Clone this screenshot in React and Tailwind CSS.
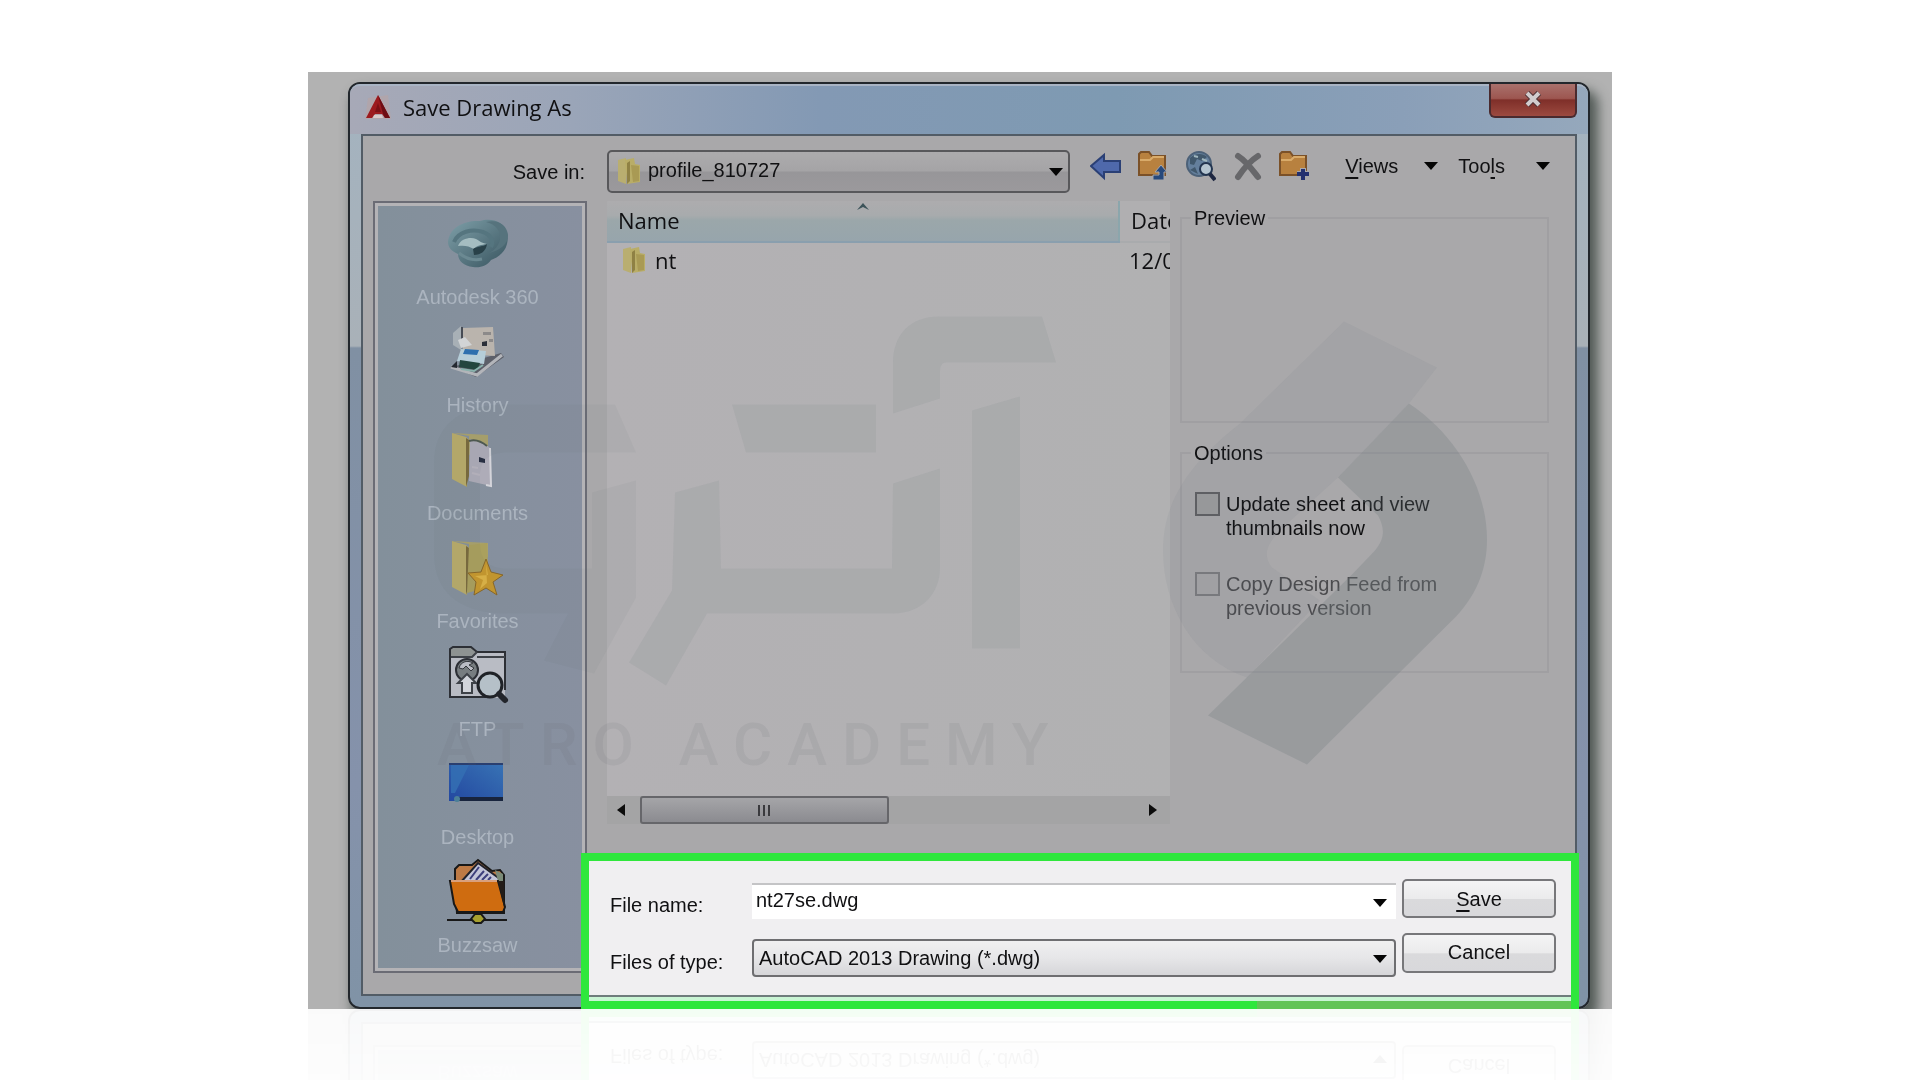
const ui = "font-['Liberation_Sans',Arial,sans-serif] text-[20px] leading-[24px]";
const segoe = "font-['Open_Sans','Noto_Sans',sans-serif] text-[22px] leading-[30px]";

function Arrow({ className }) {
    return (
        <svg viewBox="0 0 14 8" className={`w-[14px] h-[8px] ${className || ""}`} aria-hidden="true">
            <path d="M0 0h14L7 8z" fill="#050505" />
        </svg>
    )
}

function SmallFolder({ className }) {
    return (
        <svg viewBox="0 0 26 28" className={`w-[26px] h-[28px] ${className || ""}`} aria-hidden="true">
            <path d="M2 3l8-2v26l-8-3z" fill="#b9ae70" />
            <path d="M9 3l9-2 1 6 5 1v17l-13 2z" fill="#b9ad67" />
            <path d="M11 6l3-2v20l-3 3z" fill="#8f8144" />
            <path d="M15 8l8 1v15l-6 1z" fill="#a99a54" />
        </svg>
    )
}

function AppLogo() {
    return (
        <svg viewBox="0 0 28 28" className="w-[28px] h-[28px]" aria-hidden="true">
            <path d="M1 26L4 5l20-3 3 24z" fill="#b7a3a3" opacity=".6" />
            <path d="M14 2L2 25h6l3-4h7l3 4h5z" fill="#9c1a1e" />
            <path d="M14 2l5 19 2 4h5z" fill="#6e0d12" />
            <path d="M14 10l-3 9h6z" fill="#7b1015" />
            <path d="M10 22h8l1 3H9z" fill="#d9c9c9" />
        </svg>
    )
}

function CloudIcon() {
    return (
        <svg viewBox="0 0 64 56" className="w-[64px] h-[56px]">
            <defs>
                <linearGradient id="cloud" x1="0" y1="0" x2="1" y2="1">
                    <stop offset="0" stopColor="#7fa0a9" />
                    <stop offset="1" stopColor="#38545f" />
                </linearGradient>
            </defs>
            <path d="M2 26C3 12 18 4 34 5c6-2 14-2 20 2 7 5 9 13 7 21-2 8-8 13-16 16-4 6-11 8-18 7-9-1-15-6-15-13C5 35 2 31 2 26z" fill="url(#cloud)" />
            <path d="M40 6c9 2 15 8 14 17-1 6-5 11-11 14 12-3 19-9 19-18C61 9 52 3 40 6z" fill="#56737d" />
            <path d="M8 26c4-10 18-14 29-10 8 3 11 9 8 15" fill="none" stroke="#55757f" strokeWidth="4" />
            <path d="M12 30c3-8 13-9 18-7 4 2 5 4 11 5-6 1-10 1-13 5-5-3-10-4-16-3z" fill="#a5bdc1" />
            <path d="M27 33c4-3 10-2 14-5-1 7-6 11-13 11z" fill="#294149" />
            <path d="M13 37c6 5 14 8 23 6" fill="none" stroke="#6b8992" strokeWidth="3" />
        </svg>
    )
}

function HistoryIcon() {
    return (
        <svg viewBox="2 0 64 56" className="w-[64px] h-[56px]">
            <path d="M8 43l32-9 17-5 3 4-28 20z" fill="#5c5f69" />
            <path d="M7 43l26 8 25-20" fill="none" stroke="#b3b5ba" strokeWidth="3" />
            <path d="M9 9l8-7v24l-8-5z" fill="#a8b0b6" />
            <path d="M19 4l30-1 2 29-32-2z" fill="#bab4ad" />
            <path d="M18 3v18" stroke="#474c55" strokeWidth="2" />
            <path d="M39 8h8v3h-8zM45 15h4v3h-4z" fill="#8c8a8a" />
            <path d="M38 18l5-1v5h-5z" fill="#2b2f38" />
            <path d="M14 16l7-3 7 8-11 3z" fill="#d2d4d6" />
            <path d="M17 25l25 2-2 13-27-3z" fill="#b5cdd8" />
            <path d="M21 25l14 1-2 5-14-1z" fill="#2d6fae" />
            <path d="M16 36l20 3-3 7-18-3z" fill="#23463f" />
            <path d="M13 37l-6 6 6 1z" fill="#262a31" />
            <path d="M17 45l13 2 9-6" fill="none" stroke="#8ab2ad" strokeWidth="2" />
        </svg>
    )
}

function OpenFolder() {
    return (
        <>
            <path d="M10 2l36 2v14l-19 6V5z" fill="#aaa26c" />
            <path d="M10 2l14 4 3 3-2 47-15-8z" fill="#b9ac6a" />
            <path d="M24 7l3 2v36l-3 11z" fill="#7a6a3c" />
        </>
    )
}

function DocumentsIcon() {
    return (
        <svg viewBox="4 1 64 56" className="w-[64px] h-[56px]">
            <OpenFolder />
            <path d="M28 8l15 5 5 4 1 38-22-5z" fill="#aeacb8" />
            <path d="M27 10c6-2 12 0 18 5" fill="none" stroke="#4d5850" strokeWidth="2" />
            <path d="M48 17l1 38-5-1" fill="none" stroke="#d4d4da" strokeWidth="2" />
            <path d="M37 26l6 2v4l-6-1z" fill="#262c40" />
            <path d="M30 42l8 2M30 36l6 1" stroke="#b8b4bf" strokeWidth="2" />
        </svg>
    )
}

function FavoritesIcon() {
    return (
        <svg viewBox="4 1 64 56" className="w-[64px] h-[56px]">
            <OpenFolder />
            <path d="M27 6l18-2 2 44-22 6z" fill="#aaa05d" />
            <path d="M44 20l5 13 12 3-10 7 4 13-11-7-12 7 2-13-8-9 13-1z" fill="#c8982c" stroke="#8a6726" />
            <path d="M44 25l2 11-13 1 8 4-3 9 7-6z" fill="#dfb444" />
        </svg>
    )
}

function FtpIcon() {
    return (
        <svg viewBox="1 3 64 56" className="w-[64px] h-[56px] overflow-visible">
            <path d="M5 4l3-2h19l5 5h28v46H5z" fill="#b9bcc4" />
            <path d="M5 4l3-2h18l5 6-4 4H6z" fill="#8e9392" />
            <path d="M41 52H5V4l3-2h18l6 5h28v38" fill="none" stroke="#2c2f35" strokeWidth="2" />
            <path d="M6 12h21l5-5M32 12h28" fill="none" stroke="#3e4248" strokeWidth="2" />
            <circle cx="22" cy="25" r="11" fill="#777d80" stroke="#2c2f35" strokeWidth="2" />
            <path d="M14 23c2-7 9-8 14-5l-4 2 5 3-3 3-5-5-3 3z" fill="#b9bcc4" stroke="#34373c" />
            <path d="M22 29l9 9h-4v10H17V38h-4z" fill="#d2d5db" stroke="#3e4248" strokeWidth="2" />
            <circle cx="45" cy="40" r="12" fill="#b5c0c8" stroke="#1f2227" strokeWidth="3" />
            <path d="M54 49l6 6" stroke="#22252b" strokeWidth="6" strokeLinecap="round" />
        </svg>
    )
}

function DesktopIcon() {
    return (
        <svg viewBox="3 1 64 56" className="w-[64px] h-[56px]">
            <defs>
                <linearGradient id="screen" x1="0" y1="1" x2="1" y2="0">
                    <stop offset="0" stopColor="#2348a0" />
                    <stop offset="1" stopColor="#3873b5" />
                </linearGradient>
            </defs>
            <path d="M6 8h54v38H6z" fill="url(#screen)" />
            <path d="M8 10h18L12 38H8z" fill="#3470b4" opacity=".8" />
            <path d="M6 9h54" stroke="#2a3f70" strokeWidth="2" />
            <path d="M12 42h48v4H12z" fill="#18243d" />
            <circle cx="14" cy="44" r="3" fill="#4b7f98" />
        </svg>
    )
}

function BuzzsawIcon() {
    return (
        <svg viewBox="1 6 64 64" className="w-[64px] h-[64px] -mb-2 overflow-visible">
            <path d="M10 22V11l4-4h13l6-5 14 11 8-1 4 5v38H12z" fill="#bd7a45" stroke="#181818" strokeWidth="2" />
            <path d="M16 24L33 5l22 16v6z" fill="#c3c5d8" stroke="#20222c" strokeWidth="2" />
            <path d="M25 21l9-12M31 22l8-9M37 22l6-6M43 22l3-3" stroke="#3d3f7c" strokeWidth="2" />
            <path d="M50 12l8 4v7h-5z" fill="#7b8b78" />
            <path d="M5 23h48l7 26-2 5H13l-4-8z" fill="#cf6c10" stroke="#181818" strokeWidth="2" />
            <path d="M53 23l6 26V23z" fill="#231c18" />
            <path d="M6 23h46" stroke="#d9a07c" strokeWidth="2" />
            <path d="M2 62h60" stroke="#181818" strokeWidth="2" />
            <path d="M26 61l4-5h6l4 5-4 4h-6z" fill="#a8a12e" stroke="#181818" strokeWidth="2" />
        </svg>
    )
}

const places = [
    { name: "Autodesk 360", Icon: CloudIcon },
    { name: "History", Icon: HistoryIcon },
    { name: "Documents", Icon: DocumentsIcon },
    { name: "Favorites", Icon: FavoritesIcon },
    { name: "FTP", Icon: FtpIcon },
    { name: "Desktop", Icon: DesktopIcon },
    { name: "Buzzsaw", Icon: BuzzsawIcon },
];

function FolderShape() {
    return (
        <>
            <path d="M2 7V4l2-2h8l3 4h13v19H2z" fill="#b8813f" stroke="#7b5128" strokeWidth="2" />
            <path d="M3 10h10l3-3h11" fill="none" stroke="#d9ab6a" strokeWidth="2" />
        </>
    )
}

const tools = [
    {
        name: "Back",
        art: <path d="M1 16L14 5v6h16v11H14v6z" fill="#4f69ab" stroke="#2b4075" strokeWidth="2" />,
    },
    {
        name: "Up one level",
        art: (
            <>
                <FolderShape />
                <path d="M16 30v-5h6v-3h-4l6-7 6 7h-3v8z" fill="#27497c" stroke="#a8a7aa" />
            </>
        ),
    },
    {
        name: "Search the Web",
        art: (
            <>
                <circle cx="15" cy="14" r="12" fill="#647f9c" stroke="#4c6178" strokeWidth="2" />
                <path d="M6 8c5-5 13-5 17-1l-5 4-5-2-3 6-4-1zM6 20l5-3 3 7z" fill="#41586c" />
                <path d="M10 6l4 1M18 9l5 2" stroke="#9fb5bd" strokeWidth="2" />
                <circle cx="22" cy="19" r="6" fill="#b4c4d0" stroke="#22344f" strokeWidth="2" />
                <path d="M26 24l5 6" stroke="#1d2640" strokeWidth="4" />
            </>
        ),
    },
    {
        name: "Delete",
        art: <path d="M7 6c8 5 13 12 20 21M27 6C19 11 13 18 7 27" fill="none" stroke="#67676a" strokeWidth="6" strokeLinecap="round" />,
    },
    {
        name: "Create New Folder",
        art: (
            <>
                <FolderShape />
                <path d="M25 18v12M19 24h12" stroke="#a8a7aa" strokeWidth="6" />
                <path d="M25 19v11M19 24h12" stroke="#23306f" strokeWidth="4" />
            </>
        ),
    },
];

function Toolbar() {
    return (
        <div className="flex items-center h-8">
            <div className="flex gap-[15px]">
                {tools.map((tool) => (
                    <button key={tool.name} type="button" aria-label={tool.name} className="w-8 h-8">
                        <svg viewBox="0 0 32 32" className="w-8 h-8">{tool.art}</svg>
                    </button>
                ))}
            </div>
            <button type="button" className="ml-[35px] flex items-center gap-[26px]">
                <span><u className="underline-offset-4 decoration-2">V</u>iews</span>
                <Arrow />
            </button>
            <button type="button" className="ml-[20px] flex items-center gap-[31px]">
                <span>Too<u className="underline-offset-4 decoration-2">l</u>s</span>
                <Arrow />
            </button>
        </div>
    )
}

function Places() {
    return (
        <nav className="w-[214px] shrink-0 mb-[21px] border-2 border-[#6b6c75] bg-[#b4b3b6] p-[3px]">
            <div className="h-full bg-[linear-gradient(90deg,#83909b,#8890a0)] pt-[10px] pb-[9px] pr-[5px] flex flex-col items-center gap-[13px]">
                {places.map(({ name, Icon }) => (
                    <button key={name} type="button" className="h-[95px] w-full flex flex-col items-center gap-[11px] text-[#abb4bf]">
                        <Icon />
                        <span className="leading-[28px]">{name}</span>
                    </button>
                ))}
            </div>
        </nav>
    )
}

function FileList() {
    return (
        <div className="flex-1 min-w-0 flex flex-col">
            <div className="flex-1 bg-[linear-gradient(90deg,#b3b1b4,#b1b1b2)] overflow-hidden">
                <table className={`w-full table-fixed border-collapse text-left ${segoe}`}>
                    <colgroup>
                        <col />
                        <col className="w-[51px]" />
                    </colgroup>
                    <thead>
                        <tr className="h-[41px]">
                            <th scope="col" className="relative font-normal pl-[11px] pb-[2px] border-r-2 border-b-2 border-r-[#8ba6ac] border-b-[#8a9fae] bg-[linear-gradient(180deg,#adacae_0%,#a8abad_36%,#9ba7aa_48%,#97a5ac_100%)]">
                                Name
                                <svg viewBox="0 0 12 7" className="absolute left-1/2 top-[2px] -ml-[6px] w-[12px] h-[7px]" aria-hidden="true">
                                    <path d="M0 7L6 0l6 7-6-3z" fill="#3c5359" />
                                </svg>
                            </th>
                            <th scope="col" className="font-normal pl-[11px] pb-[2px] overflow-hidden whitespace-nowrap border-b-2 border-[#a9abad] bg-[#b0afb1]">Date</th>
                        </tr>
                    </thead>
                    <tbody>
                        <tr className="h-[36px]">
                            <td className="pl-[14px] pb-px">
                                <span className="flex items-center gap-2">
                                    <SmallFolder />
                                    nt
                                </span>
                            </td>
                            <td className="pl-[10px] pb-px overflow-hidden whitespace-nowrap">12/0</td>
                        </tr>
                    </tbody>
                </table>
            </div>
            <div className="h-[28px] flex items-center bg-[#a4a4a5]">
                <button type="button" aria-label="Scroll left" className="w-[33px] h-full flex items-center pl-[10px]">
                    <svg viewBox="0 0 8 12" className="w-[8px] h-[12px]"><path d="M8 0v12L0 6z" fill="#0c0c0c" /></svg>
                </button>
                <div className="flex-1 h-full">
                    <div className="w-1/2 h-full rounded-[3px] border-2 border-[#66666a] bg-[linear-gradient(180deg,#a5a5a8,#8b8b90)] flex items-center justify-center gap-[3px]">
                        <i className="w-[2px] h-[11px] bg-[#3a3a3e]" />
                        <i className="w-[2px] h-[11px] bg-[#3a3a3e]" />
                        <i className="w-[2px] h-[11px] bg-[#3a3a3e]" />
                    </div>
                </div>
                <button type="button" aria-label="Scroll right" className="w-[33px] h-full flex items-center justify-end pr-[13px]">
                    <svg viewBox="0 0 8 12" className="w-[8px] h-[12px]"><path d="M0 0v12l8-6z" fill="#0c0c0c" /></svg>
                </button>
            </div>
        </div>
    )
}

function Options() {
    return (
        <div className="w-[369px] shrink-0 mr-[26px] pt-[5px] flex flex-col gap-[18px]">
            <fieldset className="h-[217px] border-2 border-[#a09fa2]">
                <legend className="ml-[9px] px-[3px]">Preview</legend>
            </fieldset>
            <fieldset className="h-[232px] border-2 border-[#a09fa2]">
                <legend className="ml-[9px] px-[3px]">Options</legend>
                <div className="pl-[13px] pt-[27px] flex flex-col gap-[32px]">
                    <label className="flex gap-[6px]">
                        <input type="checkbox" className="appearance-none shrink-0 w-[25px] h-[24px] border-2 border-[#5f5f62] bg-[#9c9c9e]" />
                        <span>Update sheet and view<br />thumbnails now</span>
                    </label>
                    <label className="flex gap-[6px] text-[#4b4b4e]">
                        <input type="checkbox" disabled className="appearance-none shrink-0 w-[25px] h-[24px] border-2 border-[#7b7b7e] bg-[#a6a5a7]" />
                        <span>Copy Design Feed from<br />previous version</span>
                    </label>
                </div>
            </fieldset>
        </div>
    )
}

function Watermark() {
    return (
        <svg viewBox="0 0 1304 936" className="absolute inset-0 w-full h-full pointer-events-none" aria-hidden="true">
            <g transform="translate(-308 -72)" fill="#5c6a6c" fillOpacity=".09">
                <path d="M893 413v-50c0-30 18-47 46-47h103l14 46H946c-4 0-6 3-6 10v26z" />
                <path d="M732 404h144v48H746z" />
                <path d="M972 410l48-14v252h-48z" />
                <path d="M675 492l44-12 2 88h171l1-85 47-15v99c0 26-18 46-47 46H707l-41 72-37-23 43-72z" />
                <path d="M507 404h108l21 48H507c-18 0-27 8-27 24v66c0 18 9 26 27 26h85v-76l44-12v117l-42 76-50-13 24-47h-61c-46 0-73-20-73-60v-90c0-39 27-59 73-59z" fillOpacity=".06" />
                <path d="M1344 321l93 46-28 36-71 74-55 50c-18 18-20 28-11 40l48 33-73 77c-54-18-84-72-84-127 0-52 30-90 77-127z" fillOpacity=".07" />
                <path d="M1409 403c48 32 78 85 78 136 0 30-11 58-35 81l-145 144-99-49 145-142 22-23c10-12 10-22 3-35l-40-38z" fill="#717a7c" fillOpacity=".28" />
                <text x="437" y="764" fontSize="60" fontWeight="500" fill="#5f6068" fillOpacity=".1" className="font-[Roboto,sans-serif] tracking-[15px]">ATRO ACADEMY</text>
            </g>
        </svg>
    )
}

function SaveForm() {
    return (
        <form onSubmit={(e) => e.preventDefault()} className="relative z-10 mt-[29px] -ml-[26px] -mr-[4px] -mb-[15px] border-8 border-[#2fe73c] bg-[#f0eff1] pt-[18px]">
            <div className="grid grid-cols-[142px_1fr_154px] grid-rows-[40px_44px] gap-y-[14px] pl-[21px] pr-[15px]">
                <label htmlFor="file-name" className="self-end pb-[2px]">File name:</label>
                <div className="relative self-end mr-[6px]">
                    <input id="file-name" type="text" defaultValue="nt27se.dwg" className="block w-full h-[36px] bg-white border-t-2 border-[#c4c4c6] pl-1 pb-1 outline-none" />
                    <Arrow className="absolute right-[9px] top-[16px]" />
                </div>
                <button type="submit" className="h-[39px] rounded-[5px] border-2 border-[#77777a] bg-[linear-gradient(180deg,#f4f4f5_0%,#ebebec_50%,#dadadc_52%,#d8d8db_100%)]">
                    <u className="underline-offset-4 decoration-2">S</u>ave
                </button>
                <label htmlFor="file-type" className="self-end pb-[3px]">Files of type:</label>
                <div className="relative self-end mr-[6px]">
                    <select id="file-type" className="block appearance-none w-full h-[38px] rounded-[4px] border-2 border-[#6e6e71] pl-[5px] outline-none bg-[linear-gradient(180deg,#f0f0f1_0%,#e6e6e8_50%,#d6d6d9_100%)]">
                        <option>AutoCAD 2013 Drawing (*.dwg)</option>
                    </select>
                    <Arrow className="absolute right-[9px] top-[16px] pointer-events-none" />
                </div>
                <button type="button" className="h-[40px] rounded-[5px] border-2 border-[#77777a] pb-[2px] bg-[linear-gradient(180deg,#f4f4f5_0%,#ebebec_50%,#dadadc_52%,#d8d8db_100%)]">
                    Cancel
                </button>
            </div>
            <div className="mt-[18px] h-[6px] border-t-2 border-[#6f7c7c] bg-[#c9f5d4]" />
            <div className="absolute -bottom-[8px] right-0 w-[32%] h-[8px] bg-[#62c456]" />
        </form>
    )
}

export default function App() {
    return (
        <div className={`min-h-screen bg-white pt-[72px] overflow-hidden text-[#101012] ${ui}`}>
            <main className="relative w-full max-w-[1304px] mx-auto overflow-hidden bg-[#b2b2b2] pt-[10px] pl-[40px] pr-[22px] [-webkit-box-reflect:below_0px_linear-gradient(to_bottom,transparent_84%,rgba(0,0,0,0.06)_100%)]">
                <div className="rounded-[12px] border-2 border-[#22272c] bg-[linear-gradient(180deg,#a3b3c0_0px,#a9b1b8_262px,#8090a3_264px,#8592ab_700px,#8093a6_100%)] shadow-[6px_10px_12px_2px_rgba(50,60,55,0.75)] px-[11px] pb-[11px]">
                    <header className="-mx-[11px] h-[50px] rounded-t-[10px] border-t-2 border-[#a9b4c4] bg-[linear-gradient(90deg,#a7a9b7_0%,#9aa5b8_18%,#8399b4_38%,#7e9ab2_62%,#8a9fb8_85%,#95a8bc_100%)] flex items-start pl-[14px] pr-[11px]">
                        <div className="flex items-center gap-[11px] pt-[6px]">
                            <AppLogo />
                            <h1 className={segoe}>Save Drawing As</h1>
                        </div>
                        <button type="button" aria-label="Close" className="ml-auto -mt-[2px] w-[88px] h-[34px] pb-[2px] flex items-center justify-center rounded-b-[6px] border-2 border-t-0 border-[#4a2a2e] bg-[linear-gradient(180deg,#a9716c_0%,#9d5650_45%,#7f2f29_50%,#9c4a40_100%)]">
                            <svg viewBox="0 0 18 16" className="w-[18px] h-[16px]">
                                <path d="M3 2l12 12M15 2L3 14" stroke="#4b2f33" strokeWidth="6" />
                                <path d="M3 2l12 12M15 2L3 14" stroke="#d2cccd" strokeWidth="4" />
                            </svg>
                        </button>
                    </header>
                    <div className="border-2 border-[#525c66] bg-[#a9a8aa]">
                        <div className="flex pt-[14px] pr-[25px]">
                            <label htmlFor="save-in" className="w-[244px] pr-[22px] pt-[10px] text-right">Save in:</label>
                            <div className="relative flex-1 mr-[20px]">
                                <select id="save-in" className="block appearance-none w-full h-[43px] rounded-[5px] border-2 border-[#58585b] pl-[39px] pb-[4px] outline-none bg-[linear-gradient(180deg,#acabad_0%,#a5a4a6_48%,#979699_52%,#9b999c_100%)]">
                                    <option>profile_810727</option>
                                </select>
                                <SmallFolder className="absolute left-[9px] top-[7px] pointer-events-none" />
                                <Arrow className="absolute right-[7px] top-[18px] pointer-events-none" />
                            </div>
                            <Toolbar />
                        </div>
                        <div className="flex pt-[8px] pl-[10px]">
                            <Places />
                            <div className="flex-1 min-w-0 ml-[20px] flex flex-col">
                                <div className="flex-1 flex gap-[10px]">
                                    <FileList />
                                    <Options />
                                </div>
                                <SaveForm />
                            </div>
                        </div>
                    </div>
                </div>
                <Watermark />
            </main>
        </div>
    )
}
